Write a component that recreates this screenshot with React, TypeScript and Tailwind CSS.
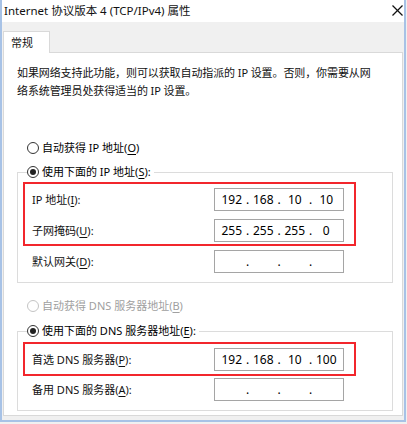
import React from 'react';

const IpBox: React.FC<{ parts?: string[] }> = ({ parts }) => (
  <div className="flex h-[23px] w-[130px] items-center border border-[#a5a5a5] bg-white px-[4px] text-[12px] text-black">
    {[0, 1, 2, 3].map((i) => (
      <React.Fragment key={i}>
        {i > 0 && <span className="w-[6px] text-center">.</span>}
        <span className="w-[26px] text-center">{parts ? parts[i] : ''}</span>
      </React.Fragment>
    ))}
  </div>
);

const Radio: React.FC<{ checked?: boolean; disabled?: boolean; children: React.ReactNode }> = ({
  checked,
  disabled,
  children,
}) => (
  <div className="flex h-[18px] items-center gap-[3px] whitespace-nowrap">
    <span
      className={`flex h-[12px] w-[12px] items-center justify-center rounded-full border bg-white ${
        disabled ? 'border-[#c4c4c4]' : 'border-[#333333]'
      }`}
    >
      {checked && <span className="h-[6px] w-[6px] rounded-full bg-[#222222]" />}
    </span>
    <span className={disabled ? 'text-[#a0a0a0]' : 'text-black'}>{children}</span>
  </div>
);

const Row: React.FC<{ label: React.ReactNode; parts?: string[] }> = ({ label, parts }) => (
  <div className="flex items-center">
    <span className="w-[182px] whitespace-nowrap">{label}</span>
    <IpBox parts={parts} />
  </div>
);

const Key: React.FC<{ k: string }> = ({ k }) => <span className="underline underline-offset-2">{k}</span>;

export default function App() {
  return (
    <div className="h-[424px] w-[407px] bg-[#f0f0f0] font-['Noto_Sans','Noto_Sans_CJK_SC',sans-serif] text-[11px] leading-[18px] text-[#111111]">
      <div className="flex h-[422px] w-[406px] flex-col border-x-2 border-b-2 border-[#a7c2e6] bg-white">
        {/* title bar */}
        <div className="flex h-[22px] items-start justify-between pl-[2px] pr-[1px] pt-[2px]">
          <span className="whitespace-nowrap text-[11.5px]">Internet 协议版本 4 (TCP/IPv4) 属性</span>
          <svg viewBox="0 0 11 11" className="mt-[3px] h-[11px] w-[11px] shrink-0">
            <line x1="0.5" y1="0.5" x2="10.5" y2="10.5" stroke="#111111" strokeWidth="1.2" />
            <line x1="10.5" y1="0.5" x2="0.5" y2="10.5" stroke="#111111" strokeWidth="1.2" />
          </svg>
        </div>

        <div className="flex flex-1 flex-col bg-[#f0f0f0] px-[1px] pb-[4px]">
          {/* tabs */}
          <div className="flex h-[30px] items-end">
            <div className="relative z-10 -mb-px flex h-[22px] w-[47px] items-center border border-b-0 border-[#d9d9d9] bg-white pl-[7px]">
              常规
            </div>
          </div>

          {/* panel */}
          <div className="flex-1 border border-[#d9d9d9] bg-white pl-[13px] pt-[11px]">
            <p className="whitespace-nowrap leading-[18px] tracking-[-0.1px]">
              如果网络支持此功能，则可以获取自动指派的 IP 设置。否则，你需要从网
              <br />
              络系统管理员处获得适当的 IP 设置。
            </p>

            <div className="mt-[39px] pl-[10px]">
              <Radio>
                自动获得 IP 地址(<Key k="O" />)
              </Radio>
            </div>

            <fieldset className="mt-[6px] w-[376px] border border-[#dcdcdc] pb-[9px]">
              <legend className="ml-[9px] bg-white pr-[3px]">
                <Radio checked>
                  使用下面的 IP 地址(<Key k="S" />):
                </Radio>
              </legend>
              <div className="ml-[5px] mt-[1px] flex w-[333px] flex-col gap-[8px] border-2 border-[#f2262c] pb-[2px] pl-[7px] pt-[4px]">
                <Row label={<>IP 地址(<Key k="I" />):</>} parts={['192', '168', '10', '10']} />
                <Row label={<>子网掩码(<Key k="U" />):</>} parts={['255', '255', '255', '0']} />
              </div>
              <div className="mt-[4px] pl-[14px]">
                <Row label={<>默认网关(<Key k="D" />):</>} />
              </div>
            </fieldset>

            <div className="mt-[14px] pl-[10px]">
              <Radio disabled>
                自动获得 DNS 服务器地址(<Key k="B" />)
              </Radio>
            </div>

            <fieldset className="mt-[7px] w-[376px] border border-[#dcdcdc] pb-[9px]">
              <legend className="ml-[9px] bg-white pr-[3px]">
                <Radio checked>
                  使用下面的 DNS 服务器地址(<Key k="E" />):
                </Radio>
              </legend>
              <div className="ml-[5px] mt-[2px] flex w-[333px] flex-col border-2 border-[#f2262c] pb-[3px] pl-[7px] pt-[4px]">
                <Row label={<>首选 DNS 服务器(<Key k="P" />):</>} parts={['192', '168', '10', '100']} />
              </div>
              <div className="mt-[2px] pl-[14px]">
                <Row label={<>备用 DNS 服务器(<Key k="A" />):</>} />
              </div>
            </fieldset>
          </div>
        </div>
      </div>
    </div>
  );
}
